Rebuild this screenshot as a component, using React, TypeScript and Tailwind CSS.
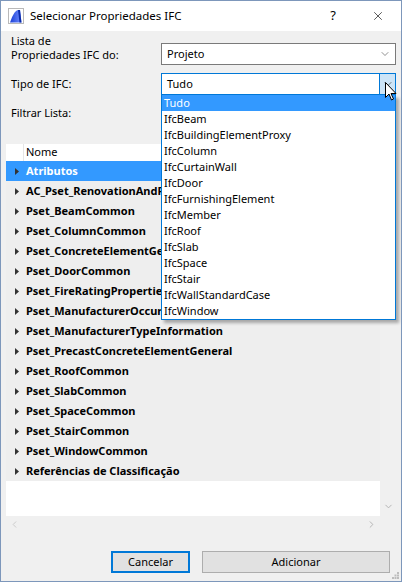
import { ChevronDown, ChevronLeft, ChevronRight, X } from 'lucide-react';

const FONT = { fontFamily: '"Segoe UI", "Noto Sans", sans-serif' };

const psets = [
  'Atributos',
  'AC_Pset_RenovationAndPhase',
  'Pset_BeamCommon',
  'Pset_ColumnCommon',
  'Pset_ConcreteElementGeneral',
  'Pset_DoorCommon',
  'Pset_FireRatingProperties',
  'Pset_ManufacturerOccurrence',
  'Pset_ManufacturerTypeInformation',
  'Pset_PrecastConcreteElementGeneral',
  'Pset_RoofCommon',
  'Pset_SlabCommon',
  'Pset_SpaceCommon',
  'Pset_StairCommon',
  'Pset_WindowCommon',
  'Referências de Classificação',
];

const ifcTypes = [
  'Tudo',
  'IfcBeam',
  'IfcBuildingElementProxy',
  'IfcColumn',
  'IfcCurtainWall',
  'IfcDoor',
  'IfcFurnishingElement',
  'IfcMember',
  'IfcRoof',
  'IfcSlab',
  'IfcSpace',
  'IfcStair',
  'IfcWallStandardCase',
  'IfcWindow',
];

function AppIcon() {
  return (
    <svg width="16" height="16" viewBox="0 0 16 16" aria-hidden>
      <defs>
        <linearGradient id="ac" x1="0" y1="0" x2="1" y2="0">
          <stop offset="0" stopColor="#1a3fd6" />
          <stop offset="1" stopColor="#6f8cff" />
        </linearGradient>
      </defs>
      <rect x="0.5" y="0.5" width="15" height="15" fill="#fff" stroke="#b9b9b9" />
      <path d="M2 14.5 C4 9, 6.5 2.5, 10 2 L12 2 L13.5 14.5 Z" fill="url(#ac)" />
      <path d="M10 2 L12 2 L13.5 14.5 L11.5 14.5 Z" fill="#0a2aa8" />
    </svg>
  );
}

function Cursor() {
  return (
    <svg width="12" height="19" viewBox="0 0 12 19" aria-hidden className="absolute left-[384px] top-[81px]">
      <path d="M0.5 0.5 L0.5 15.5 L4 12 L6.5 18 L8.5 17 L6 11.5 L11 11.5 Z" fill="#fff" stroke="#000" strokeWidth="1" />
    </svg>
  );
}

function Caret() {
  return (
    <svg width="4" height="7" viewBox="0 0 4 7" aria-hidden>
      <path d="M0 0 L4 3.5 L0 7 Z" fill="#333" />
    </svg>
  );
}

export default function App() {
  return (
    <div
      style={FONT}
      className="relative flex h-[582px] w-[402px] flex-col overflow-hidden border border-[#7d97bb] bg-[#f0f0f0] text-[11px] text-black"
    >
      {/* title bar */}
      <div className="flex h-[30px] shrink-0 items-center bg-white pl-[7px]">
        <AppIcon />
        <span className="ml-[6px] text-[11.5px]">Selecionar Propriedades IFC</span>
        <span className="ml-auto mr-[35px] text-[13px]">?</span>
        <X className="mr-[16px] h-[14px] w-[14px]" strokeWidth={1.1} />
      </div>

      {/* form */}
      <div className="flex flex-col pl-[10px] pr-[5px]">
        <div className="flex items-start">
          <div className="mt-[3px] w-[150px] leading-[14px]">
            Lista de
            <br />
            Propriedades IFC do:
          </div>
          <div className="mt-[12px] flex h-[22px] w-[235px] items-center border border-[#7a7a7a] bg-white pl-[5px] pr-[4px]">
            <span>Projeto</span>
            <ChevronDown className="ml-auto h-[12px] w-[12px] text-[#555]" strokeWidth={1.3} />
          </div>
        </div>

        <div className="mt-[8px] flex items-center">
          <div className="w-[150px]">Tipo de IFC:</div>
          <div className="flex h-[22px] w-[235px] items-center border border-[#0078d7] bg-white pl-[5px]">
            <span>Tudo</span>
            <div className="ml-auto flex h-full w-[16px] items-center justify-center border-l border-[#0078d7] bg-[#cce4f7]">
              <ChevronDown className="h-[12px] w-[12px] text-[#333]" strokeWidth={1.3} />
            </div>
          </div>
        </div>

        <div className="mt-[7px] flex items-center">
          <div className="w-[150px]">Filtrar Lista:</div>
          <div className="h-[22px] w-[235px] border border-[#7a7a7a] bg-white" />
        </div>
      </div>

      {/* property list */}
      <div className="ml-[5px] mt-[20px] flex h-[388px] w-[390px] flex-col">
        <div className="flex min-h-0 flex-1">
          <div className="flex w-[374px] flex-col bg-white">
            <div className="flex h-[17px] items-stretch">
              <div className="w-[18px] border-r border-[#e5e5e5]" />
              <div className="flex items-center pl-[2px]">Nome</div>
            </div>
            {psets.map((name, i) => (
              <div
                key={name}
                className={
                  i === 0
                    ? 'flex h-[20px] items-center bg-[#3399ff] pl-[9px] font-bold text-white'
                    : 'flex h-[20px] items-center bg-[#eeeeee] pl-[9px] font-bold'
                }
              >
                <Caret />
                <span className="ml-[7px] whitespace-nowrap">{name}</span>
              </div>
            ))}
          </div>
          <div className="flex w-[16px] flex-col items-center justify-end pb-[4px]">
            <ChevronDown className="h-[11px] w-[11px] text-[#b0b0b0]" strokeWidth={2} />
          </div>
        </div>
        <div className="flex h-[16px] w-[374px] items-center justify-between px-[3px]">
          <ChevronLeft className="h-[11px] w-[11px] text-[#c8c8c8]" strokeWidth={2} />
          <ChevronRight className="h-[11px] w-[11px] text-[#b0b0b0]" strokeWidth={2} />
        </div>
      </div>

      {/* buttons */}
      <div className="mt-[19px] flex pl-[110px]">
        <button className="h-[22px] w-[79px] border-2 border-[#0078d7] bg-[#e1e1e1]">Cancelar</button>
        <button className="ml-[12px] h-[22px] w-[188px] border border-[#adadad] bg-[#e1e1e1]">Adicionar</button>
      </div>

      {/* resize grip */}
      <svg width="7" height="7" viewBox="0 0 7 7" aria-hidden className="absolute bottom-[2px] right-[2px]">
        <rect x="5" y="0" width="2" height="2" fill="#bdbdbd" />
        <rect x="2.5" y="2.5" width="2" height="2" fill="#bdbdbd" />
        <rect x="5" y="2.5" width="2" height="2" fill="#bdbdbd" />
        <rect x="0" y="5" width="2" height="2" fill="#bdbdbd" />
        <rect x="2.5" y="5" width="2" height="2" fill="#bdbdbd" />
        <rect x="5" y="5" width="2" height="2" fill="#bdbdbd" />
      </svg>

      {/* open dropdown */}
      <div className="absolute left-[160px] top-[94px] w-[235px] border-x border-b border-[#0078d7] bg-white shadow-[3px_3px_3px_rgba(0,0,0,0.3)]">
        {ifcTypes.map((t, i) => (
          <div
            key={t}
            className={i === 0 ? 'flex h-[16px] items-center bg-[#3399ff] pl-[2px] text-white' : 'flex h-[16px] items-center pl-[2px]'}
          >
            {t}
          </div>
        ))}
      </div>

      <Cursor />
    </div>
  );
}
